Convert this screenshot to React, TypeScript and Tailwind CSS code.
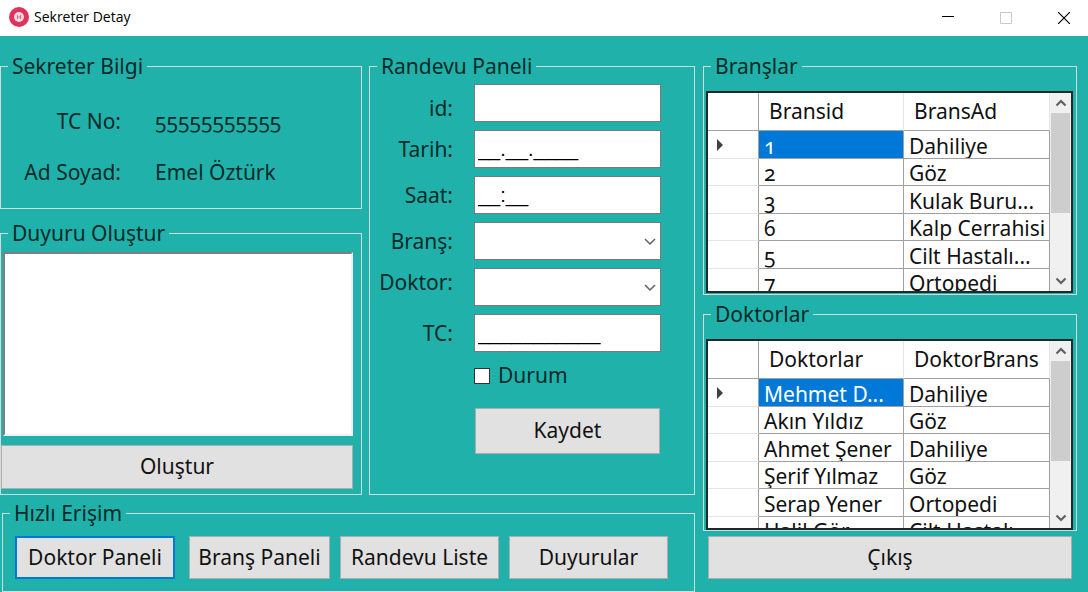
import type { ReactNode } from "react";

function GroupBox({ title, className = "", children }: { title: string; className?: string; children: ReactNode }) {
  return (
    <fieldset className={`min-w-0 border border-[#cfdcda] ${className}`}>
      <legend className="ml-[7px] px-1 leading-7">{title}</legend>
      {children}
    </fieldset>
  );
}

function FormButton({ children, className = "", focused = false }: { children: ReactNode; className?: string; focused?: boolean }) {
  const edge = focused ? "border-2 border-[#0078d7]" : "border border-[#adadad]";
  return (
    <button type="button" className={`bg-[#e1e1e1] text-center whitespace-nowrap text-[#111111] ${edge} ${className}`}>
      {children}
    </button>
  );
}

const fieldBox = "h-[38px] w-full min-w-0 border border-[#7a7a7a] bg-white";

function FieldRow({ id, label, align = "self-center", children }: { id: string; label: string; align?: string; children: ReactNode }) {
  return (
    <div className="flex gap-[21px]">
      <label htmlFor={id} className={`w-[83px] shrink-0 text-right leading-7 ${align}`}>
        {label}
      </label>
      {children}
    </div>
  );
}

function MaskedInput({ id, mask = "" }: { id: string; mask?: string }) {
  return (
    <input
      id={id}
      type="text"
      defaultValue={mask}
      className={`${fieldBox} px-[3px] font-['Liberation_Sans',sans-serif] text-[20px] text-black outline-none`}
    />
  );
}

function ComboBox({ id }: { id: string }) {
  return (
    <div className="relative w-full min-w-0">
      <select id={id} className={`${fieldBox} block appearance-none px-1 outline-none`}>
        <option value=""></option>
      </select>
      <svg className="pointer-events-none absolute top-4 right-[5px] h-2 w-3" viewBox="0 0 12 8" fill="none" stroke="#606060" strokeWidth="1.5" aria-hidden="true">
        <path d="M1 1l5 5 5-5" />
      </svg>
    </div>
  );
}

function ScrollBar() {
  return (
    <div className="flex w-[21px] shrink-0 flex-col bg-[#f0f0f0]" aria-hidden="true">
      <div className="flex h-5 items-center justify-center">
        <svg className="h-2 w-3" viewBox="0 0 12 8" fill="none" stroke="#606060" strokeWidth="2.2">
          <path d="M1.5 6.5L6 2l4.5 4.5" />
        </svg>
      </div>
      <div className="mx-px h-[100px] bg-[#cdcdcd]" />
      <div className="mt-auto flex h-5 items-center justify-center">
        <svg className="h-2 w-3" viewBox="0 0 12 8" fill="none" stroke="#606060" strokeWidth="2.2">
          <path d="M1.5 1.5L6 6l4.5-4.5" />
        </svg>
      </div>
    </div>
  );
}

function DataGrid({ columns, rows, height }: { columns: string[]; rows: string[][]; height: string }) {
  return (
    <div className={`mr-[3px] ml-[2px] mt-[11px] flex overflow-hidden border-2 border-[#1e2a2a] bg-white text-[#111111] ${height}`}>
      <div className="min-w-0 flex-1 overflow-hidden">
        <table className="w-full table-fixed border-separate border-spacing-0">
          <colgroup>
            <col className="w-[51px]" />
            <col className="w-[145px]" />
            <col />
          </colgroup>
          <thead>
            <tr className="h-[38px]">
              <th className="border-r border-b border-[#a0a0a0] p-0" />
              {columns.map((c) => (
                <th key={c} className="border-r border-b border-r-[#e5e5e5] border-b-[#a0a0a0] p-0 pl-[10px] text-left leading-[37px] font-normal">
                  {c}
                </th>
              ))}
            </tr>
          </thead>
          <tbody>
            {rows.map((row, i) => (
              <tr key={i} className="odd:h-7 even:h-[27px]">
                <td className="border-r border-b border-r-[#a0a0a0] border-b-[#e5e5e5] p-0">
                  {i === 0 && (
                    <svg className="ml-2 h-3 w-2" viewBox="0 0 8 12" fill="#404040" aria-hidden="true">
                      <path d="M1 0l6 6-6 6z" />
                    </svg>
                  )}
                </td>
                {row.map((cell, j) => (
                  <td
                    key={j}
                    className={`border-r border-b border-[#a0a0a0] p-0 ${i === 0 && j === 0 ? "bg-[#0078d7] text-white" : ""}`}
                  >
                    <div className="h-[26px] overflow-hidden pl-[5px] leading-[29px] whitespace-nowrap">{cell}</div>
                  </td>
                ))}
              </tr>
            ))}
          </tbody>
        </table>
      </div>
      <ScrollBar />
    </div>
  );
}

const branches = [
  ["1", "Dahiliye"],
  ["2", "Göz"],
  ["3", "Kulak Buru..."],
  ["6", "Kalp Cerrahisi"],
  ["5", "Cilt Hastalı..."],
  ["7", "Ortopedi"],
];

const doctors = [
  ["Mehmet D...", "Dahiliye"],
  ["Akın Yıldız", "Göz"],
  ["Ahmet Şener", "Dahiliye"],
  ["Şerif Yılmaz", "Göz"],
  ["Serap Yener", "Ortopedi"],
  ["Halil Gör", "Cilt Hastalı..."],
];

function TitleBar() {
  return (
    <header className="flex h-9 items-center gap-[10px] bg-white text-black">
      <div className="mb-[3px] flex flex-1 items-center gap-[5px] pl-[9px]">
        <svg className="h-5 w-5" viewBox="0 0 20 20" aria-hidden="true">
          <circle cx="10" cy="10" r="10" fill="#e0325a" />
          <circle cx="10" cy="10" r="5" fill="#f6dce2" />
          <path d="M8.5 8v4M11.5 8v4M8.5 10h3" stroke="#e0708a" strokeWidth="1.2" />
        </svg>
        <h1 className="font-['Open_Sans',sans-serif] text-sm">Sekreter Detay</h1>
      </div>
      <button type="button" aria-label="Simge durumuna küçült" className="flex h-full w-12 items-center justify-center">
        <svg className="h-3 w-3" viewBox="0 0 12 12" stroke="#000" aria-hidden="true">
          <path d="M0 4.5h12" />
        </svg>
      </button>
      <button type="button" aria-label="Ekranı kapla" disabled className="flex h-full w-12 items-center justify-center">
        <svg className="h-3 w-3" viewBox="0 0 12 12" fill="none" stroke="#c8c8c8" aria-hidden="true">
          <path d="M.5.5h11v11H.5z" />
        </svg>
      </button>
      <button type="button" aria-label="Kapat" className="flex h-full w-12 items-center justify-center">
        <svg className="h-3 w-3" viewBox="0 0 12 12" stroke="#000" strokeWidth="1.2" aria-hidden="true">
          <path d="M0 0l12 12M12 0L0 12" />
        </svg>
      </button>
    </header>
  );
}

export default function App() {
  return (
    <div className="flex min-h-screen flex-col bg-[#20b2aa] font-['Noto_Sans',sans-serif] text-[21px] text-[#062a29] oldstyle-nums">
      <TitleBar />
      <main className="grid flex-1 grid-cols-[695fr_374fr] items-start gap-2 pt-4 pr-[11px]">
        <div className="flex min-w-0 flex-col gap-1">
          <div className="grid grid-cols-[362fr_326fr] gap-[7px]">
            <div className="flex min-w-0 flex-col gap-[10px]">
              <GroupBox title="Sekreter Bilgi">
                <dl className="grid grid-cols-[120px_1fr] gap-x-[34px] pt-4 pb-[10px] leading-[51px]">
                  <dt className="text-right">TC No:</dt>
                  <dd>55555555555</dd>
                  <dt className="text-right">Ad Soyad:</dt>
                  <dd>Emel Öztürk</dd>
                </dl>
              </GroupBox>
              <GroupBox title="Duyuru Oluştur">
                <div className="flex flex-col pt-[5px] pr-2 pb-[5px]">
                  <textarea
                    aria-label="Duyuru metni"
                    className="ml-[2px] h-[184px] resize-none border-2 border-t-[#7f7f7f] border-r-[#f0f0f0] border-b-[#f0f0f0] border-l-[#7f7f7f] bg-white p-1 outline-none"
                  />
                  <FormButton className="mt-[9px] h-11">Oluştur</FormButton>
                </div>
              </GroupBox>
            </div>
            <GroupBox title="Randevu Paneli">
              <form className="pt-1 pr-[33px]">
                <div className="flex flex-col gap-2">
                  <FieldRow id="randevu-id" label="id:" align="self-end">
                    <MaskedInput id="randevu-id" />
                  </FieldRow>
                  <FieldRow id="tarih" label="Tarih:">
                    <MaskedInput id="tarih" mask="__.__.____" />
                  </FieldRow>
                  <FieldRow id="saat" label="Saat:">
                    <MaskedInput id="saat" mask="__:__" />
                  </FieldRow>
                  <FieldRow id="brans" label="Branş:">
                    <ComboBox id="brans" />
                  </FieldRow>
                  <FieldRow id="doktor" label="Doktor:" align="self-start">
                    <ComboBox id="doktor" />
                  </FieldRow>
                  <FieldRow id="tc" label="TC:">
                    <MaskedInput id="tc" mask="___________" />
                  </FieldRow>
                </div>
                <div className="flex flex-col pl-[104px]">
                  <label className="mt-3 flex h-6 items-center gap-2">
                    <input type="checkbox" className="h-4 w-4 appearance-none border border-[#333333] bg-white" />
                    Durum
                  </label>
                  <FormButton className="mx-px mt-5 h-[46px]">Kaydet</FormButton>
                </div>
              </form>
            </GroupBox>
          </div>
          <GroupBox title="Hızlı Erişim" className="ml-[2px]">
            <nav className="grid grid-cols-[164fr_141fr_159fr_159fr] gap-[10px] pt-[9px] pr-[26px] pb-3 pl-3">
              <FormButton focused className="mr-1 h-[43px]">
                Doktor Paneli
              </FormButton>
              <FormButton className="h-[43px]">Branş Paneli</FormButton>
              <FormButton className="h-[43px]">Randevu Liste</FormButton>
              <FormButton className="h-[43px]">Duyurular</FormButton>
            </nav>
          </GroupBox>
        </div>
        <div className="flex min-w-0 flex-col">
          <GroupBox title="Branşlar" className="mb-[5px] pb-px">
            <DataGrid columns={["Bransid", "BransAd"]} rows={branches} height="h-[202px]" />
          </GroupBox>
          <GroupBox title="Doktorlar" className="mb-[5px]">
            <DataGrid columns={["Doktorlar", "DoktorBrans"]} rows={doctors} height="h-[191px]" />
          </GroupBox>
          <FormButton className="mx-[5px] h-[43px]">Çıkış</FormButton>
        </div>
      </main>
    </div>
  );
}
